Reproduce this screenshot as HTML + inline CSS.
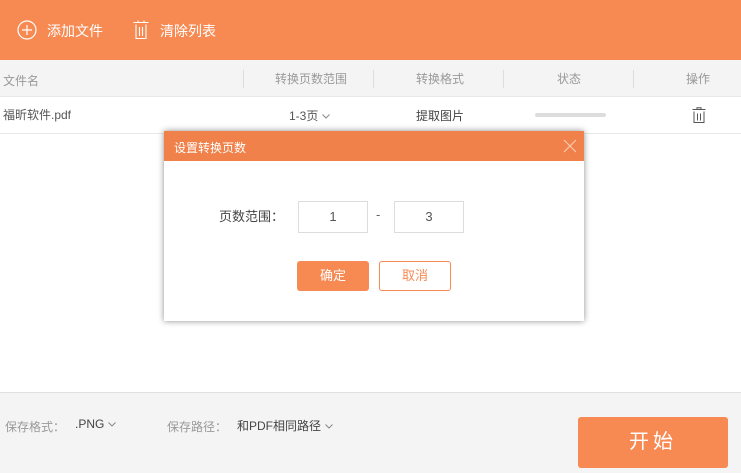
<!DOCTYPE html><html><head><meta charset="utf-8"><style>
*{margin:0;padding:0;box-sizing:border-box}
body{width:741px;height:473px;position:relative;overflow:hidden;background:#fff;font-family:"Liberation Sans","Noto Sans CJK SC",sans-serif;font-size:13px;color:#333}
.a{position:absolute}
.top{left:0;top:0;width:741px;height:60px;background:#f78a53;color:#fff;font-size:14px}
.hdr{left:0;top:60px;width:741px;height:37px;background:#f4f4f4;border-bottom:1px solid #e8e8e8;color:#999;font-size:12px}
.sep{top:10px;width:1px;height:18px;background:#ddd}
.row{left:0;top:97px;width:741px;height:37px;border-bottom:1px solid #e8e8e8;font-size:12px}
.ft{left:0;top:392px;width:741px;height:81px;background:#f4f4f4;border-top:1px solid #e0e0e0;font-size:12px}
.cv{display:inline-block;vertical-align:middle;margin-left:4px}
</style></head><body>
<div class="a top">
<svg class="a" style="left:17px;top:20px" width="20" height="20"><circle cx="10" cy="10" r="9" fill="none" stroke="#fff" stroke-width="1.2"/><path d="M10 5v10M5 10h10" stroke="#fff" stroke-width="1.2"/></svg>
<span class="a" style="left:47px;top:21px">添加文件</span>
<svg class="a" style="left:133px;top:20px" width="16" height="19"><path d="M0.5 2.5h15M5 2.5V0.5M11 2.5V0.5M3 4.5v14h10v-14M6.5 7v9M9.5 7v9" fill="none" stroke="#fff" stroke-width="1.1"/></svg>
<span class="a" style="left:160px;top:21px">清除列表</span>
</div>
<div class="a hdr">
<span class="a" style="left:3px;top:12px">文件名</span>
<div class="a sep" style="left:243px"></div>
<span class="a" style="left:275px;top:10px">转换页数范围</span>
<div class="a sep" style="left:373px"></div>
<span class="a" style="left:416px;top:10px">转换格式</span>
<div class="a sep" style="left:503px"></div>
<span class="a" style="left:557px;top:10px">状态</span>
<div class="a sep" style="left:633px"></div>
<span class="a" style="left:686px;top:10px">操作</span>
</div>
<div class="a row">
<span class="a" style="left:3px;top:9px;color:#555">福昕软件.pdf</span>
<span class="a" style="left:289px;top:10px;color:#555">1-3页<svg class="cv" width="8" height="5"><path d="M0.5 0.5l3.5 3.5 3.5-3.5" fill="none" stroke="#888"/></svg></span>
<span class="a" style="left:416px;top:10px;color:#444">提取图片</span>
<div class="a" style="left:535px;top:16px;width:71px;height:4px;border-radius:2px;background:#ddd"></div>
<svg class="a" style="left:692px;top:10px" width="14" height="16"><path d="M0.5 2.5h13M5 2.5V0.8h4v1.7M2 4.5v11h10v-11M5.5 6.5v7M8.5 6.5v7" fill="none" stroke="#555" stroke-width="1"/></svg>
</div>
<div class="a" style="left:164px;top:131px;width:420px;height:190px;background:#fff;box-shadow:0 0 6px rgba(0,0,0,.45)">
<div class="a" style="left:0;top:0;width:420px;height:30px;background:#f0814a;color:#fff;font-size:12px"><span class="a" style="left:10px;top:8px">设置转换页数</span>
<svg class="a" style="left:399px;top:8px" width="14" height="14"><path d="M1 1l12 12M13 1L1 13" stroke="#fbd0b8" stroke-width="1"/></svg></div>
<span class="a" style="left:55px;top:75px;font-size:13px;color:#444">页数范围：</span>
<div class="a" style="left:134px;top:70px;width:70px;height:32px;border:1px solid #ddd;text-align:center;line-height:30px;color:#555">1</div>
<span class="a" style="left:212px;top:76px;color:#666">-</span>
<div class="a" style="left:230px;top:70px;width:70px;height:32px;border:1px solid #ddd;text-align:center;line-height:30px;color:#555">3</div>
<div class="a" style="left:133px;top:130px;width:72px;height:30px;background:#f78a53;border-radius:3px;color:#fff;text-align:center;line-height:30px">确定</div>
<div class="a" style="left:215px;top:130px;width:72px;height:30px;border:1px solid #f78a53;border-radius:3px;color:#f78a53;text-align:center;line-height:28px">取消</div>
</div>
<div class="a ft">
<span class="a" style="left:5px;top:25px;color:#999">保存格式：</span>
<span class="a" style="left:75px;top:24px;color:#444">.PNG<svg class="cv" width="8" height="5"><path d="M0.5 0.5l3.5 3.5 3.5-3.5" fill="none" stroke="#888"/></svg></span>
<span class="a" style="left:167px;top:25px;color:#999">保存路径：</span>
<span class="a" style="left:237px;top:24px;color:#444">和PDF相同路径<svg class="cv" width="8" height="5"><path d="M0.5 0.5l3.5 3.5 3.5-3.5" fill="none" stroke="#888"/></svg></span>
<div class="a" style="left:578px;top:24px;width:150px;height:51px;background:#f78a53;border-radius:3px;color:#fff;font-size:20px;text-align:center;line-height:51px;letter-spacing:4px">开始</div>
</div>
</body></html>
